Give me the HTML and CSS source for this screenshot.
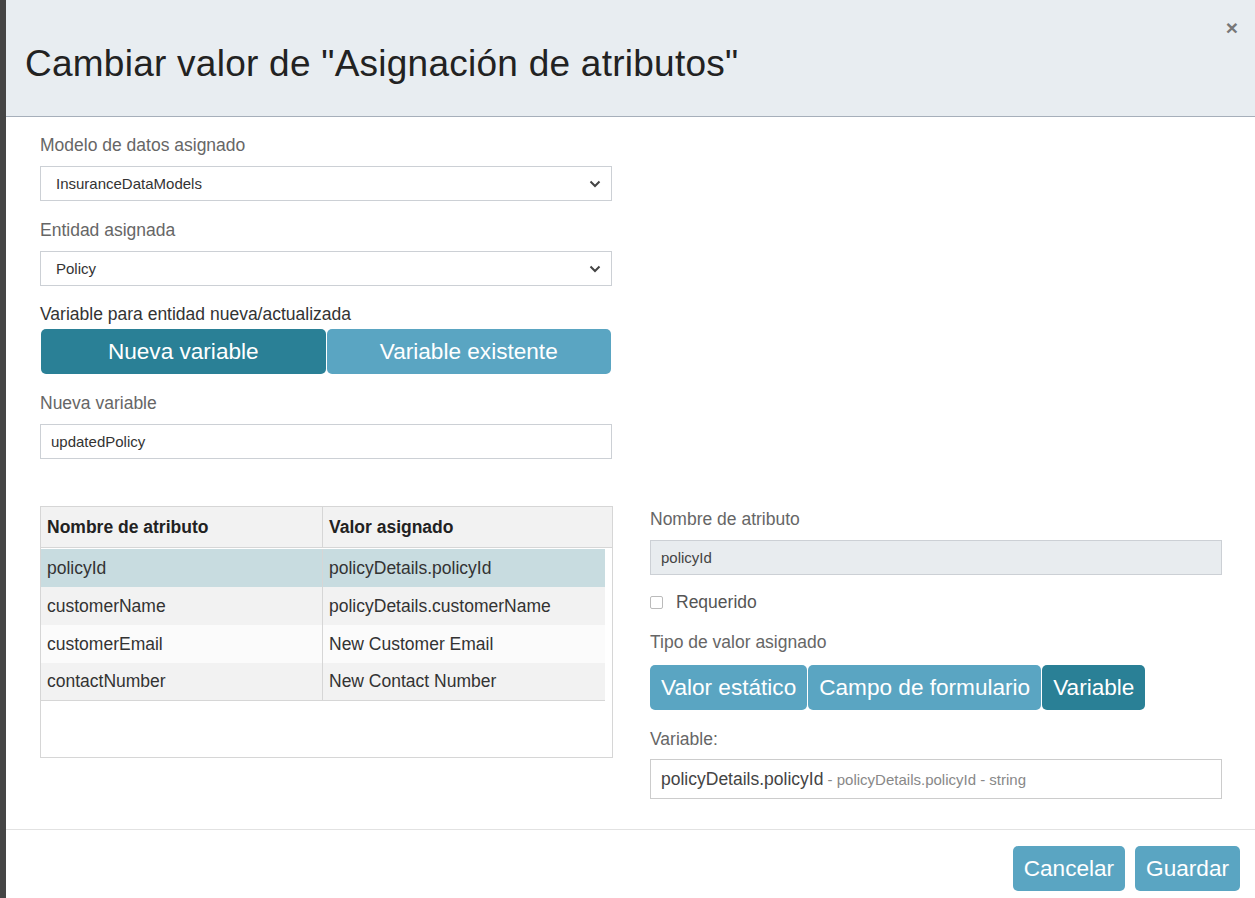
FILE: index.html
```html
<!DOCTYPE html>
<html lang="es">
<head>
<meta charset="utf-8">
<title>Cambiar valor</title>
<link rel="stylesheet" href="styles.css">
</head>
<body>
<div class="backdrop"></div>
<div class="modal">
  <div class="modal-header">
    <h1 class="title">Cambiar valor de "Asignación de atributos"</h1>
    <span class="close">×</span>
  </div>
  <div class="modal-body">
    <div class="top-col">
      <div class="label">Modelo de datos asignado</div>
      <div class="select">
        <span>InsuranceDataModels</span>
        <svg class="chev" width="12" height="8" viewBox="0 0 12 8"><path d="M1.5 1.5 L6 6 L10.5 1.5" fill="none" stroke="#444" stroke-width="2"/></svg>
      </div>
      <div class="label mt">Entidad asignada</div>
      <div class="select">
        <span>Policy</span>
        <svg class="chev" width="12" height="8" viewBox="0 0 12 8"><path d="M1.5 1.5 L6 6 L10.5 1.5" fill="none" stroke="#444" stroke-width="2"/></svg>
      </div>
      <div class="label dark mt tight">Variable para entidad nueva/actualizada</div>
      <div class="btn-group wide">
        <button class="tbtn active">Nueva variable</button>
        <button class="tbtn">Variable existente</button>
      </div>
      <div class="label mt">Nueva variable</div>
      <div class="input">updatedPolicy</div>
    </div>
    <div class="bottom">
      <div class="table-wrap">
        <div class="trow thead">
          <div class="cell">Nombre de atributo</div>
          <div class="cell">Valor asignado</div>
        </div>
        <div class="tbody">
          <div class="trow sel"><div class="cell">policyId</div><div class="cell">policyDetails.policyId</div></div>
          <div class="trow odd"><div class="cell">customerName</div><div class="cell">policyDetails.customerName</div></div>
          <div class="trow even"><div class="cell">customerEmail</div><div class="cell">New Customer Email</div></div>
          <div class="trow odd last"><div class="cell">contactNumber</div><div class="cell">New Contact Number</div></div>
        </div>
      </div>
      <div class="detail">
        <div class="label">Nombre de atributo</div>
        <div class="input disabled">policyId</div>
        <label class="check"><span class="box"></span><span>Requerido</span></label>
        <div class="label tipo">Tipo de valor asignado</div>
        <div class="btn-group">
          <button class="tbtn">Valor estático</button>
          <button class="tbtn">Campo de formulario</button>
          <button class="tbtn active">Variable</button>
        </div>
        <div class="label mt2">Variable:</div>
        <div class="input var">policyDetails.policyId<span class="muted"> - policyDetails.policyId - string</span></div>
      </div>
    </div>
  </div>
  <div class="modal-footer">
    <button class="fbtn">Cancelar</button>
    <button class="fbtn">Guardar</button>
  </div>
</div>
</body>
</html>
```

FILE: styles.css
```css
html, body {
  margin: 0;
  padding: 0;
  height: 100%;
  overflow: hidden;
}
body {
  font-family: "Liberation Sans", Arial, sans-serif;
  background: #464646;
  display: flex;
}
.backdrop {
  width: 6px;
  flex: none;
  background: #454545;
}
.modal {
  flex: 1;
  background: #fff;
  display: flex;
  flex-direction: column;
}
.modal-header {
  height: 116px;
  background: #e8edf1;
  border-bottom: 1px solid #a6afba;
  display: flex;
  justify-content: space-between;
  padding: 0 0 0 19px;
  flex: none;
}
.title {
  margin: 42px 0 0 0;
  font-weight: normal;
  font-size: 37px;
  line-height: 44px;
  color: #222;
  letter-spacing: 0.25px;
}
.close {
  margin: 16px 17px 0 0;
  font-size: 21px;
  font-weight: bold;
  color: #777;
  line-height: 24px;
}
.modal-body {
  padding: 18px 33px 0 34px;
  flex: none;
  height: 713px;
  box-sizing: border-box;
  border-bottom: 1px solid #e2e2e2;
}
.top-col {
  width: 572px;
}
.label {
  font-size: 17.5px;
  line-height: 20px;
  color: #666;
  margin-bottom: 11px;
}
.label.dark {
  color: #333;
}
.label.mt {
  margin-top: 19px;
}
.label.tight {
  margin-top: 18px;
  margin-bottom: 5px;
}
.select, .input {
  height: 35px;
  box-sizing: border-box;
  border: 1px solid #ccd0d5;
  display: flex;
  align-items: center;
  justify-content: space-between;
  padding: 0 10px 0 10px;
  font-size: 15px;
  color: #333;
}
.select {
  padding-left: 15px;
}
.chev {
  display: block;
}
.btn-group {
  display: flex;
  gap: 1px;
}
.tbtn {
  font-family: "Liberation Sans", Arial, sans-serif;
  border: none;
  border-radius: 5px;
  background: #5aa5c2;
  color: #fff;
  font-size: 22.6px;
  height: 45px;
  padding: 0 11px;
  cursor: pointer;
}
.tbtn.active {
  background: #2a8096;
}
.btn-group.wide .tbtn {
  flex: 1;
}
.btn-group.wide {
  padding-left: 1px;
  width: 570px;
}
.bottom {
  display: flex;
  margin-top: 47px;
  gap: 37px;
}
.table-wrap {
  width: 573px;
  height: 252px;
  box-sizing: border-box;
  border: 1px solid #d6d6d6;
  flex: none;
}
.trow {
  display: flex;
  height: 38px;
  align-items: stretch;
  font-size: 17.5px;
  color: #333;
}
.trow .cell {
  display: flex;
  align-items: center;
  padding-left: 6px;
  box-sizing: border-box;
  white-space: nowrap;
}
.trow .cell:first-child {
  width: 282px;
  border-right: 1px solid #d6d6d6;
}
.trow .cell:last-child {
  flex: 1;
}
.thead {
  height: 40px;
  background: #f2f2f2;
  border-bottom: 1px solid #d6d6d6;
  font-weight: bold;
  color: #222;
}
.tbody {
  width: 564px;
  padding-top: 1px;
}
.trow.sel { background: #c8dce0; }
.trow.odd { background: #f2f2f2; }
.trow.even { background: #fbfbfb; }
.trow.last { border-bottom: 1px solid #d6d6d6; height: 37px; }
.detail {
  width: 572px;
  padding-top: 3px;
}
.input.disabled {
  background: #e8ecef;
  color: #444;
}
.check {
  display: flex;
  align-items: center;
  gap: 13px;
  margin: 17px 0 0 0;
  font-size: 17.5px;
  color: #555;
  line-height: 20px;
}
.check .box {
  width: 13px;
  height: 13px;
  border: 1px solid #bbb;
  border-radius: 2px;
  background: #fff;
  box-sizing: border-box;
}
.label.tipo {
  margin-top: 20px;
  margin-bottom: 13px;
}
.label.mt2 {
  margin-top: 19px;
  margin-bottom: 10px;
}
.input.var {
  height: 40px;
  justify-content: flex-start;
  font-size: 17.5px;
  color: #444;
  border-color: #ccc;
}
.muted {
  font-size: 15px;
  color: #888;
  white-space: pre;
}
.modal-footer {
  display: flex;
  justify-content: flex-end;
  gap: 10px;
  padding: 16px 15px 0 0;
}
.fbtn {
  font-family: "Liberation Sans", Arial, sans-serif;
  border: none;
  border-radius: 5px;
  background: #5aa5c2;
  color: #fff;
  font-size: 22.6px;
  height: 45px;
  padding: 0 11px;
}
```
